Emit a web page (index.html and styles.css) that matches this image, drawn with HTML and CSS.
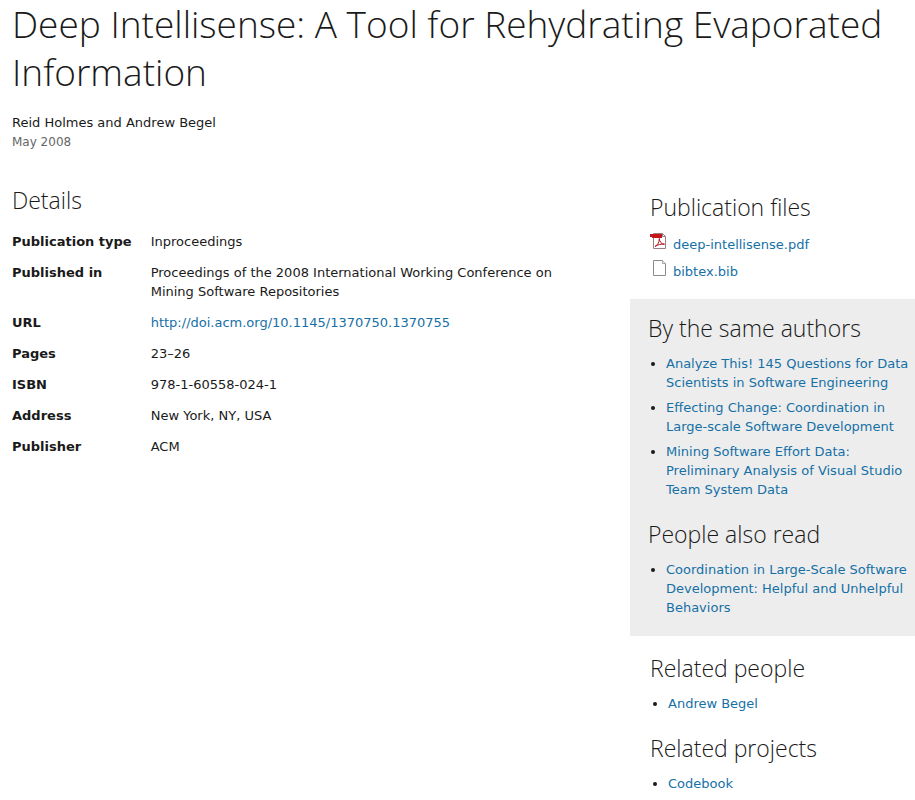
FILE: index.html
```html
<!DOCTYPE html>
<html lang="en">
<head>
  <meta charset="UTF-8">
  <meta name="viewport" content="width=device-width, initial-scale=1.0">
  <title>Deep Intellisense: A Tool for Rehydrating Evaporated Information</title>
  <link rel="stylesheet" href="styles.css">
</head>
<body>
  <header>
    <h1>Deep Intellisense: A Tool for Rehydrating Evaporated Information</h1>
    <p class="authors">Reid Holmes and Andrew Begel</p>
    <p class="date">May 2008</p>
  </header>

  <div class="columns">
    <main>
      <h2>Details</h2>
      <table class="details">
        <tr><th scope="row">Publication type</th><td>Inproceedings</td></tr>
        <tr><th scope="row">Published in</th><td>Proceedings of the 2008 International Working Conference on Mining Software Repositories</td></tr>
        <tr><th scope="row">URL</th><td><a href="http://doi.acm.org/10.1145/1370750.1370755">http://doi.acm.org/10.1145/1370750.1370755</a></td></tr>
        <tr><th scope="row">Pages</th><td>23–26</td></tr>
        <tr><th scope="row">ISBN</th><td>978-1-60558-024-1</td></tr>
        <tr><th scope="row">Address</th><td>New York, NY, USA</td></tr>
        <tr><th scope="row">Publisher</th><td>ACM</td></tr>
      </table>
    </main>

    <aside>
      <section class="files">
        <h2>Publication files</h2>
        <ul class="file-list">
          <li>
            <svg width="16" height="16" viewBox="0 0 16 16" aria-hidden="true">
              <path d="M3.5 .5h9l3 3v12h-12z" fill="#fff" stroke="#9a8080"/>
              <path d="M12.5 .5v3h3" fill="none" stroke="#9a8080"/>
              <path d="M0 1h12v4H2V4H0z" fill="#c4161c"/>
              <path d="M5 13.500c2-1 4.500-4 4.300-8 .4 3.500 2 5.500 5.200 5.700-3.500-.4-6.500.4-9.500 2.300z" fill="none" stroke="#b3141a"/>
            </svg>
            <a href="#">deep-intellisense.pdf</a>
          </li>
          <li>
            <svg width="16" height="16" viewBox="0 0 16 16" aria-hidden="true">
              <path d="M3.500 .5h9l3 3v12h-12z" fill="#fff" stroke="#8c8c8c"/>
              <path d="M12.500 .5v3h3" fill="#eee" stroke="#a8a8a8"/>
            </svg>
            <a href="#">bibtex.bib</a>
          </li>
        </ul>
      </section>

      <section class="suggested">
        <h2>By the same authors</h2>
        <ul>
          <li><a href="#">Analyze This! 145 Questions for Data Scientists in Software Engineering</a></li>
          <li><a href="#">Effecting Change: Coordination in Large-scale Software Development</a></li>
          <li><a href="#">Mining Software Effort Data: Preliminary Analysis of Visual Studio Team System Data</a></li>
        </ul>
        <h2>People also read</h2>
        <ul>
          <li><a href="#">Coordination in Large-Scale Software Development: Helpful and Unhelpful Behaviors</a></li>
        </ul>
      </section>

      <section class="related">
        <h2>Related people</h2>
        <ul>
          <li><a href="#">Andrew Begel</a></li>
        </ul>
        <h2>Related projects</h2>
        <ul>
          <li><a href="#">Codebook</a></li>
        </ul>
      </section>
    </aside>
  </div>
</body>
</html>
```
FILE: styles.css
```css
* { margin: 0; padding: 0; box-sizing: border-box; }
body { background-color: #fff; color: #1a1a1a; font: 13px/19px "DejaVu Sans", sans-serif; }
a { color: #1570a6; text-decoration: none; }
a:hover { text-decoration: underline; }

h1, h2 { font-family: "Segoe UI Light", "Open Sans", sans-serif; font-weight: 300; }
h1 { font-size: 37px; line-height: 48px; }
h2 { font-size: 23px; line-height: 32px; }

header { padding: 0 12px; }
.authors { margin-top: 17px; }
.date { margin-top: 1px; color: #666; font-size: 12px; }

.columns { display: flex; justify-content: space-between; align-items: flex-start; }
main { flex: 1; padding: 32px 40px 0 12px; }
aside { flex: 0 0 285px; padding-top: 39px; }

.details { margin-top: 10px; border-collapse: collapse; }
.details th { padding: 6px 19px 6px 0; text-align: left; vertical-align: top; white-space: nowrap; }
.details td { padding: 6px 0; vertical-align: top; }

ul { margin-top: 10px; padding-left: 18px; }
li { margin-bottom: 6px; }
ul + h2 { margin-top: 19px; }

.files { padding: 0 4px 12px 20px; }
.file-list { padding-left: 0; list-style: none; }
.file-list li { display: flex; align-items: flex-end; gap: 7px; }
.file-list svg { margin-bottom: 5px; }

.suggested { padding: 13px 4px 13px 18px; background-color: #ededed; }
.related { padding: 16px 4px 0 20px; }
```
